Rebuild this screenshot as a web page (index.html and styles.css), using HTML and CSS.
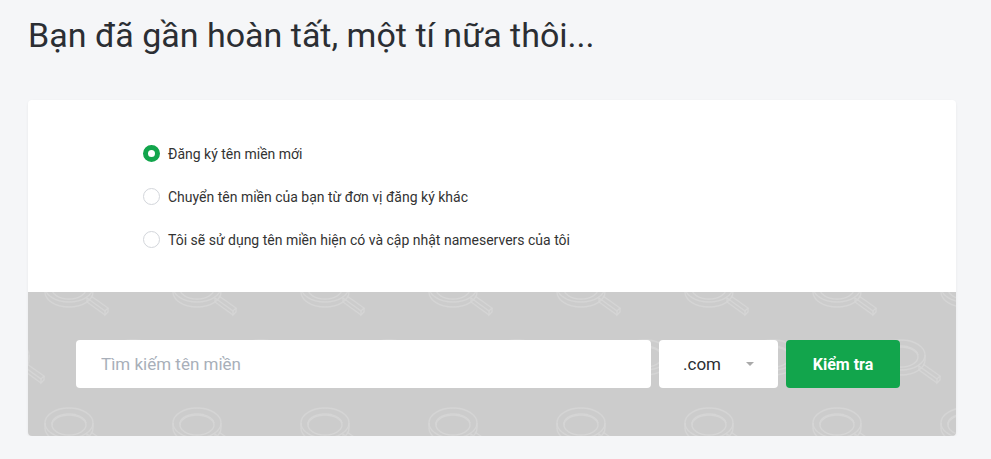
FILE: index.html
```html
<!DOCTYPE html>
<html lang="vi">
<head>
    <meta charset="UTF-8">
    <meta name="viewport" content="width=device-width, initial-scale=1.0">
    <title>Đăng ký tên miền</title>
    <link rel="stylesheet" href="styles.css">
</head>
<body>
    <div class="page">
        <h1>Bạn đã gần hoàn tất, một tí nữa thôi...</h1>

        <div class="card">
            <div class="options">
                <label class="option">
                    <input type="radio" name="domain" checked>
                    <span class="dot"></span>
                    <span>Đăng ký tên miền mới</span>
                </label>
                <label class="option">
                    <input type="radio" name="domain">
                    <span class="dot"></span>
                    <span>Chuyển tên miền của bạn từ đơn vị đăng ký khác</span>
                </label>
                <label class="option">
                    <input type="radio" name="domain">
                    <span class="dot"></span>
                    <span>Tôi sẽ sử dụng tên miền hiện có và cập nhật nameservers của tôi</span>
                </label>
            </div>

            <div class="search">
                <svg class="pattern" width="100%" height="100%" aria-hidden="true">
                    <defs>
                        <g id="glass" fill="none" stroke="#d5d5d5" stroke-width="1.3">
                            <ellipse cx="25" cy="16" rx="24" ry="15"/>
                            <path d="M1 16 v5 a24 15 0 0 0 48 0 v-5"/>
                            <ellipse cx="25" cy="18" rx="17" ry="10"/>
                            <path d="M8 18 a17 10 0 0 1 34 -2"/>
                            <path d="M43 27 l18 13 l3 -3 l-17 -12"/>
                            <path d="M61 40 v4 l3 -3 v-4"/>
                            <path d="M43 27 v4 l18 13"/>
                        </g>
                        <pattern id="glasses" x="0" y="0" width="128" height="136" patternUnits="userSpaceOnUse">
                            <use href="#glass" x="16" y="-21"/>
                            <use href="#glass" x="16" y="115"/>
                            <use href="#glass" x="80" y="47"/>
                            <use href="#glass" x="-48" y="47"/>
                        </pattern>
                    </defs>
                    <rect width="100%" height="100%" fill="url(#glasses)"/>
                </svg>
                <div class="search-row">
                    <input class="domain-input" type="text" placeholder="Tìm kiếm tên miền">
                    <div class="tld">
                        <span>.com</span>
                        <span class="caret"></span>
                    </div>
                    <button class="check">Kiểm tra</button>
                </div>
            </div>
        </div>
    </div>
</body>
</html>
```

FILE: styles.css
```css
body {
    margin: 0;
    font-family: Roboto, "Noto Sans", Arial, sans-serif;
    background-color: #f5f6f8;
    color: #333;
}
.page {
    padding: 13px 35px 0 28px;
}
h1 {
    margin: 0 0 42px;
    font-size: 34px;
    font-weight: 400;
    line-height: 45px;
    color: #2b2e33;
}
.card {
    background-color: #fff;
    border-radius: 4px;
    box-shadow: 0 1px 3px rgba(0, 0, 0, 0.06);
    overflow: hidden;
}
.options {
    padding: 40px 0 39px 115px;
    display: flex;
    flex-direction: column;
    gap: 16px;
}
.option {
    display: flex;
    align-items: center;
    gap: 8px;
    height: 27px;
    font-size: 14px;
    color: #333;
    cursor: pointer;
}
.option input {
    display: none;
}
.dot {
    width: 17px;
    height: 17px;
    box-sizing: border-box;
    border-radius: 50%;
    border: 1px solid #d3d6db;
    background: #fff;
}
.option input:checked + .dot {
    border: 5px solid #12a54c;
}
.search {
    position: relative;
    background-color: #cccccc;
    padding: 48px 56px 48px 48px;
}
.pattern {
    position: absolute;
    top: 0;
    left: 0;
}
.search-row {
    position: relative;
    display: flex;
    gap: 8px;
    height: 48px;
}
.domain-input {
    flex: 1;
    border: none;
    border-radius: 4px;
    padding: 0 25px;
    font-family: inherit;
    font-size: 17px;
    color: #333;
    outline: none;
}
.domain-input::placeholder {
    color: #a8afb9;
}
.tld {
    width: 119px;
    box-sizing: border-box;
    background: #fff;
    border-radius: 4px;
    padding: 0 24px;
    display: flex;
    align-items: center;
    justify-content: space-between;
    font-size: 17px;
    color: #2b2e33;
}
.caret {
    width: 0;
    height: 0;
    border-left: 4px solid transparent;
    border-right: 4px solid transparent;
    border-top: 4px solid #aaa;
}
.check {
    width: 114px;
    border: none;
    border-radius: 4px;
    background-color: #12a54c;
    color: #fff;
    font-family: inherit;
    font-size: 16px;
    font-weight: 700;
}
```
